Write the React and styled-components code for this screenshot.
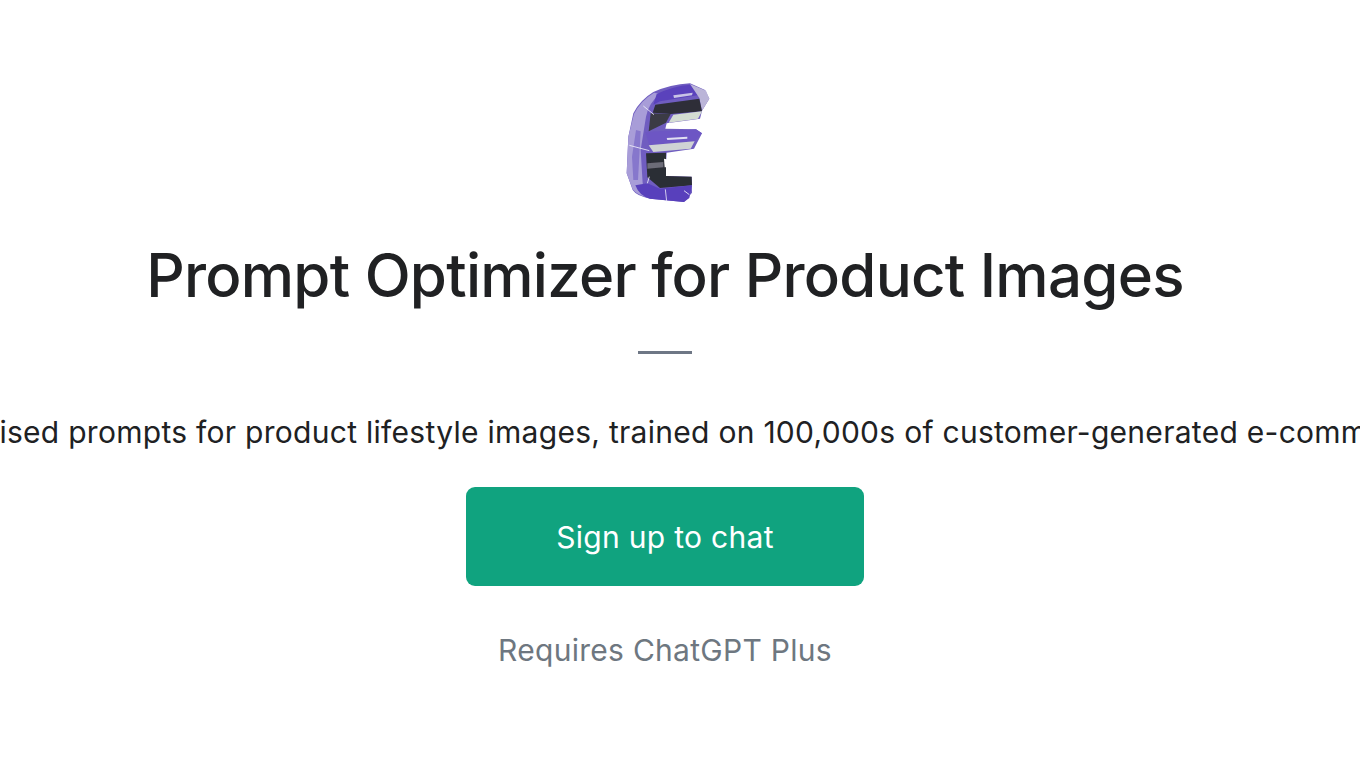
import React from "react";
import styled, { createGlobalStyle } from "styled-components";

const GlobalStyle = createGlobalStyle`
  html, body {
    margin: 0;
    padding: 0;
    background: #ffffff;
    overflow: hidden;
  }
`;

const Page = styled.div`
  display: flex;
  flex-direction: column;
  align-items: center;
  width: 1330px;
  height: 764px;
  overflow: visible;
  box-sizing: border-box;
  padding-top: 82px;
  font-family: Inter, "Liberation Sans", sans-serif;
  color: #202123;
`;

const Logo = styled.svg`
  display: block;
  width: 120px;
  height: 120px;
  flex: none;
`;

const Title = styled.h1`
  margin: 37px 0 0;
  font-size: 60px;
  line-height: 72px;
  font-weight: 500;
  letter-spacing: -0.75px;
  white-space: nowrap;
`;

const Divider = styled.div`
  width: 54px;
  height: 3px;
  margin-top: 40px;
  background: #6e7785;
`;

const Description = styled.p`
  margin: 58px 0 0;
  font-size: 30px;
  line-height: 40px;
  letter-spacing: 0.28px;
  white-space: nowrap;
`;

const SignUpButton = styled.button`
  width: 398px;
  height: 99px;
  margin-top: 35px;
  border: 0;
  border-radius: 9px;
  background: #10a37f;
  color: #ffffff;
  font-family: inherit;
  font-size: 30px;
  font-weight: 400;
  letter-spacing: 0.3px;
`;

const Note = styled.div`
  margin-top: 44px;
  font-size: 30px;
  line-height: 40px;
  letter-spacing: 0.28px;
  color: #6e7780;
`;

const EMark = () => (
  <Logo viewBox="-15 36 360 360" aria-hidden="true">
    <defs>
      <filter id="soft" x="-5%" y="-5%" width="110%" height="110%">
        <feGaussianBlur stdDeviation="1.6" />
      </filter>
    </defs>
    <g filter="url(#soft)">
      {/* silhouette */}
      <path d="M130 66 Q180 44 240 40 L285 60 L298 86 L276 122 L270 146 L170 160 L166 176 L258 178 L276 190 L252 236 L170 248 L166 318 L245 320 L246 368 L222 396 L120 386 Q80 378 68 360 L50 310 L55 200 L70 130 Q90 90 130 66 Z" fill="#6f5dc0" />
      {/* pale left band */}
      <path d="M72 132 Q92 92 132 68 L150 72 Q115 100 108 140 L92 240 L98 340 L112 382 Q82 376 68 358 L50 310 L55 200 Z" fill="#a89dd8" />
      <path d="M78 180 L92 184 L84 330 L70 330 L66 260 Z" fill="#8677cc" />
      {/* top face */}
      <path d="M140 72 Q190 48 240 44 L272 74 L150 94 L130 104 Z" fill="#5a42bc" />
      <path d="M190 76 L248 68 L246 76 L192 84 Z" fill="#c9c4e6" />
      <path d="M240 42 L288 62 L298 86 L276 122 L268 84 Z" fill="#bbb5d8" />
      {/* upper dark block and pale underside */}
      <path d="M136 104 L268 86 L276 124 L182 132 L128 128 Z" fill="#2d2e37" />
      <path d="M190 134 L276 124 L264 146 L176 158 Z" fill="#d3dcd2" />
      <path d="M122 130 L182 132 L168 158 L116 184 Z" fill="#3a3a45" />
      {/* middle arm */}
      <path d="M106 186 L258 178 L276 190 L256 212 L118 226 Z" fill="#6d57c4" />
      <path d="M170 204 L232 200 L232 206 L172 210 Z" fill="#e2e0f2" />
      <path d="M116 226 L254 214 L242 236 L130 246 Z" fill="#cfd3d4" />
      {/* lower dark block with white counter */}
      <path d="M108 250 L168 248 L168 318 L245 320 L246 346 L150 354 L112 322 Z" fill="#2c2d36" />
      <path d="M112 280 L160 276 L160 292 L112 296 Z" fill="#6c6c78" />
      <path d="M162 266 L236 282 L236 290 L164 292 Z" fill="#ffffff" />
      {/* bottom face */}
      <path d="M76 346 L112 340 L150 356 L246 346 L238 384 L222 396 L120 386 Q88 378 76 346 Z" fill="#5840bc" />
      <path d="M166 358 L170 394" stroke="#e8e6f6" strokeWidth="2.5" fill="none" />
      {/* glass cracks */}
      <path d="M58 226 L118 242 M100 108 L132 134 M112 340 L118 320 M222 362 L238 374" stroke="#f1f0fa" strokeWidth="2.5" fill="none" />
    </g>
  </Logo>
);

const App = () => (
  <>
    <GlobalStyle />
    <Page>
      <EMark />
      <Title>Prompt Optimizer for Product Images</Title>
      <Divider />
      <Description>
        Generate optimised prompts for product lifestyle images, trained on 100,000s of customer-generated e-commerce images.
      </Description>
      <SignUpButton>Sign up to chat</SignUpButton>
      <Note>Requires ChatGPT Plus</Note>
    </Page>
  </>
);

export default App;
